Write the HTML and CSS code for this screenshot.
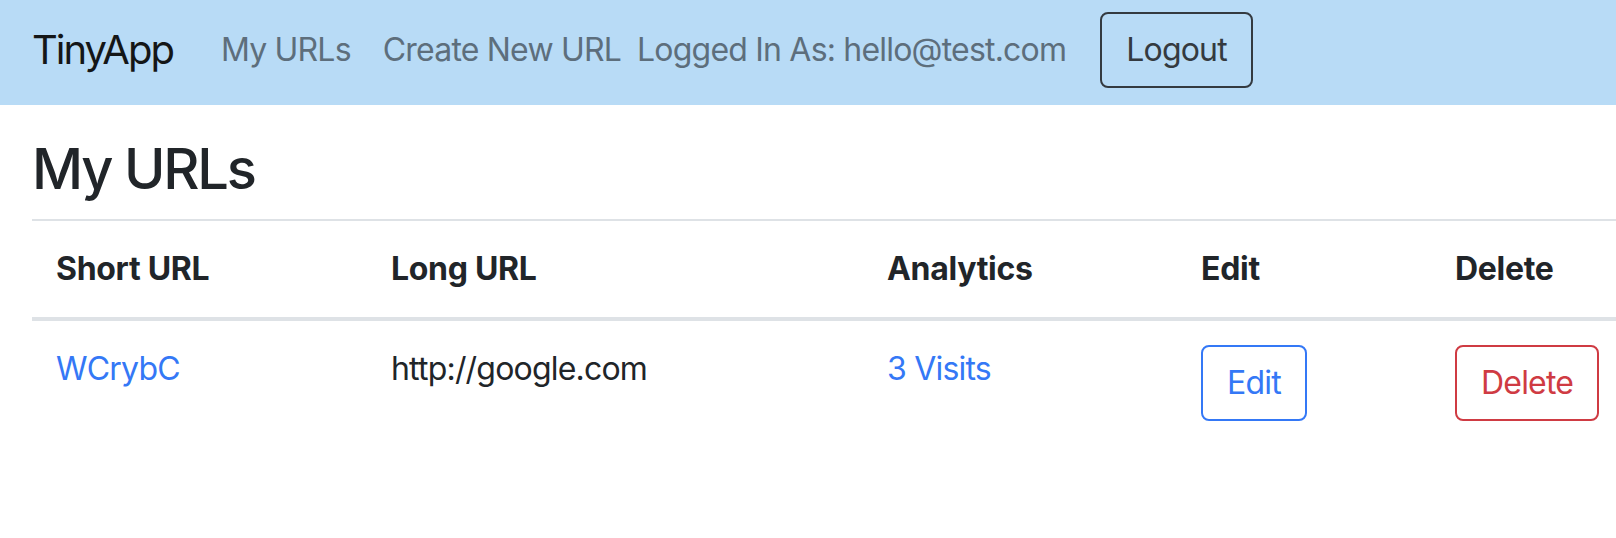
FILE: index.html
```html
<!DOCTYPE html>
<html lang="en">
<head>
<meta charset="utf-8">
<title>TinyApp</title>
<link rel="stylesheet" href="styles.css">
</head>
<body>
<nav class="navbar">
  <a class="brand" href="#">TinyApp</a>
  <a class="nav-link" href="#">My URLs</a>
  <a class="nav-link" href="#">Create New URL</a>
  <span class="nav-text">Logged In As: hello@test.com</span>
  <button class="btn btn-dark-outline" type="button">Logout</button>
</nav>
<main class="main">
  <h3 class="title">My URLs</h3>
  <table class="table">
    <colgroup>
      <col class="c1"><col class="c2"><col class="c3"><col class="c4"><col class="c5">
    </colgroup>
    <thead>
      <tr>
        <th>Short URL</th>
        <th>Long URL</th>
        <th>Analytics</th>
        <th>Edit</th>
        <th>Delete</th>
      </tr>
    </thead>
    <tbody>
      <tr>
        <td><a class="link" href="#">WCrybC</a></td>
        <td>http://google.com</td>
        <td><a class="link" href="#">3 Visits</a></td>
        <td><button class="btn btn-blue-outline" type="button">Edit</button></td>
        <td><button class="btn btn-red-outline" type="button">Delete</button></td>
      </tr>
    </tbody>
  </table>
</main>
</body>
</html>
```

FILE: styles.css
```css
html, body {
  margin: 0;
  padding: 0;
  overflow: hidden;
  background: #ffffff;
}

body {
  font-family: Inter, "Liberation Sans", sans-serif;
  color: #212529;
  font-size: 32px;
  line-height: 48px;
  letter-spacing: -0.8px;
}

a {
  text-decoration: none;
}

.navbar {
  display: flex;
  align-items: center;
  box-sizing: border-box;
  height: 105px;
  padding: 0 32px 6px 32px;
  background: #b8dbf6;
}

.brand {
  font-size: 40px;
  line-height: 60px;
  letter-spacing: -2px;
  color: #141617;
  margin-right: 32px;
}

.nav-link {
  padding: 0 16px;
  color: #5d6e7c;
}

.nav-text {
  color: #5d6e7c;
}

.btn {
  font-family: inherit;
  font-size: 32px;
  line-height: 48px;
  letter-spacing: -0.8px;
  padding: 12px 24px;
  border-radius: 8px;
  border: 2px solid;
  background: transparent;
  cursor: pointer;
}

.btn-dark-outline {
  margin-left: 34px;
  color: #343a40;
  border-color: #343a40;
}

.btn-blue-outline {
  color: #3478f6;
  border-color: #3478f6;
}

.btn-red-outline {
  color: #cf3b43;
  border-color: #cf3b43;
}

.main {
  padding: 31px 32px 0 32px;
}

.title {
  margin: 0 0 16px 0;
  font-size: 56px;
  line-height: 67px;
  font-weight: 500;
  letter-spacing: -2.2px;
}

.table {
  border-collapse: separate;
  border-spacing: 0;
  table-layout: fixed;
  width: 1592px;
}

.c1 { width: 335px; }
.c2 { width: 496px; }
.c3 { width: 314px; }
.c4 { width: 254px; }
.c5 { width: 193px; }

.table th,
.table td {
  padding: 24px;
  text-align: left;
  vertical-align: top;
}

.table th {
  font-weight: 700;
  letter-spacing: -0.3px;
  border-top: 2px solid #dee2e6;
  border-bottom: 4px solid #dee2e6;
}

.link {
  color: #3478f6;
}
```
